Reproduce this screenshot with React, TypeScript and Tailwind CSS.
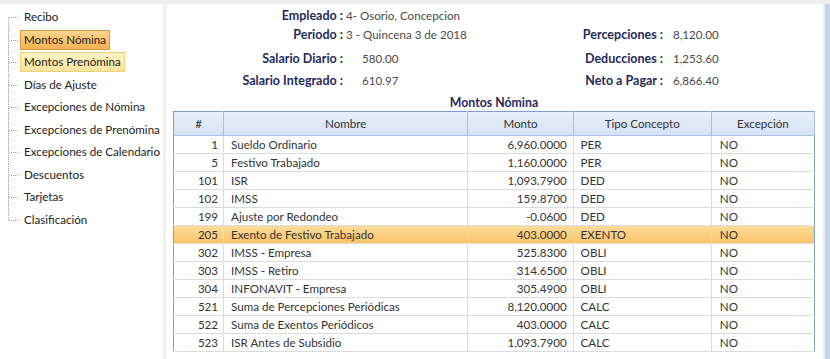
import React from "react";

const treeItems = [
  "Recibo",
  "Montos Nómina",
  "Montos Prenómina",
  "Días de Ajuste",
  "Excepciones de Nómina",
  "Excepciones de Prenómina",
  "Excepciones de Calendario",
  "Descuentos",
  "Tarjetas",
  "Clasificación",
];

const rows: [string, string, string, string, string][] = [
  ["1", "Sueldo Ordinario", "6,960.0000", "PER", "NO"],
  ["5", "Festivo Trabajado", "1,160.0000", "PER", "NO"],
  ["101", "ISR", "1,093.7900", "DED", "NO"],
  ["102", "IMSS", "159.8700", "DED", "NO"],
  ["199", "Ajuste por Redondeo", "-0.0600", "DED", "NO"],
  ["205", "Exento de Festivo Trabajado", "403.0000", "EXENTO", "NO"],
  ["302", "IMSS - Empresa", "525.8300", "OBLI", "NO"],
  ["303", "IMSS - Retiro", "314.6500", "OBLI", "NO"],
  ["304", "INFONAVIT - Empresa", "305.4900", "OBLI", "NO"],
  ["521", "Suma de Percepciones Periódicas", "8,120.0000", "CALC", "NO"],
  ["522", "Suma de Exentos Periódicos", "403.0000", "CALC", "NO"],
  ["523", "ISR Antes de Subsidio", "1,093.7900", "CALC", "NO"],
];

function TreeLine({ first, last }: { first: boolean; last: boolean }) {
  return (
    <svg width="20" height="22.5" className="shrink-0">
      <line
        x1="8.5"
        y1={first ? 11.25 : 0}
        x2="8.5"
        y2={last ? 11.25 : 22.5}
        stroke="#a0a0a0"
        strokeWidth="1"
        strokeDasharray="1 1"
      />
      <line x1="9" y1="11.5" x2="19" y2="11.5" stroke="#a0a0a0" strokeWidth="1" strokeDasharray="1 1" />
    </svg>
  );
}

export default function App() {
  const font = { fontFamily: 'Lato, "Noto Sans", sans-serif' };
  const lbl = "text-right font-bold text-[#1f2b5c] text-[12.5px]";
  return (
    <div className="w-[830px] h-[359px] bg-white flex flex-col overflow-hidden text-[11.6px]" style={font}>
      <div className="h-[4px] bg-[#efefef] shrink-0" />
      <div className="flex flex-1 min-h-0">
        {/* left tree */}
        <div className="w-[163px] shrink-0 pt-[2px] bg-white">
          {treeItems.map((t, i) => {
            const sel = i === 1;
            const hov = i === 2;
            return (
              <div key={t} className="flex items-center h-[22.5px]">
                <TreeLine first={i === 0} last={i === treeItems.length - 1} />
                <span
                  className={
                    "px-[3px] h-[20px] leading-[18px] border whitespace-nowrap text-[#222] " +
                    (sel
                      ? "border-[#d49a45] bg-gradient-to-b from-[#fcd58e] to-[#f6b24f]"
                      : hov
                      ? "border-[#efd27e] bg-gradient-to-b from-[#fff3c4] to-[#fde49c]"
                      : "border-transparent")
                  }
                >
                  {t}
                </span>
              </div>
            );
          })}
        </div>
        <div className="w-[3px] shrink-0 bg-[#efefef]" />
        {/* main */}
        <div className="flex-1 pl-[7px] pt-[3px]">
          <div className="text-[#4a4a4a]">
            <div className="flex h-[18px] items-center -ml-[7px]">
              <span className={"w-[177px] " + lbl}>Empleado :</span>
              <span className="pl-[3px]">4- Osorio, Concepcion</span>
            </div>
            <div className="flex h-[18px] items-center -ml-[7px] mt-[1px]">
              <span className={"w-[177px] " + lbl}>Periodo :</span>
              <span className="pl-[3px] w-[200px]">3 - Quincena 3 de 2018</span>
              <span className={"w-[120px] " + lbl}>Percepciones :</span>
              <span className="pl-[10px]">8,120.00</span>
            </div>
            <div className="flex h-[18px] items-center -ml-[7px] mt-[6px]">
              <span className={"w-[177px] " + lbl}>Salario Diario :</span>
              <span className="pl-[19px] w-[200px]">580.00</span>
              <span className={"w-[120px] " + lbl}>Deducciones :</span>
              <span className="pl-[10px]">1,253.60</span>
            </div>
            <div className="flex h-[18px] items-center -ml-[7px] mt-[4px]">
              <span className={"w-[177px] " + lbl}>Salario Integrado :</span>
              <span className="pl-[19px] w-[200px]">610.97</span>
              <span className={"w-[120px] " + lbl}>Neto a Pagar :</span>
              <span className="pl-[10px]">6,866.40</span>
            </div>
          </div>
          <div className="w-[642px] mt-[5px] h-[16px] leading-[16px] text-center font-bold text-[#1f2b5c] text-[12.3px]">
            Montos Nómina
          </div>
          <table className="w-[642px] table-fixed border-collapse border border-[#7d9dd4] text-[#333]">
            <colgroup>
              <col className="w-[50px]" />
              <col className="w-[244px]" />
              <col className="w-[105px]" />
              <col className="w-[138px]" />
              <col className="w-[103px]" />
            </colgroup>
            <thead>
              <tr className="h-[24px] bg-gradient-to-b from-[#e8f0fa] to-[#d5e2f4]">
                {["#", "Nombre", "Monto", "Tipo Concepto", "Excepción"].map((h) => (
                  <th
                    key={h}
                    className="font-normal text-center border-r border-b border-[#a9bfe2] p-0 leading-[22px]"
                  >
                    {h}
                  </th>
                ))}
              </tr>
            </thead>
            <tbody>
              {rows.map((r) => {
                const hl = r[0] === "205";
                return (
                  <tr
                    key={r[0]}
                    className={"h-[18px] " + (hl ? "bg-gradient-to-b from-[#fddc9a] to-[#f9c266]" : "bg-white")}
                  >
                    <td className="p-0 pr-[5px] text-right border-r border-b border-[#dcdcdc] leading-[17px] whitespace-nowrap">{r[0]}</td>
                    <td className="p-0 pl-[7px] border-r border-b border-[#dcdcdc] leading-[17px] whitespace-nowrap">{r[1]}</td>
                    <td className="p-0 pr-[6px] text-right border-r border-b border-[#dcdcdc] leading-[17px] whitespace-nowrap">{r[2]}</td>
                    <td className="p-0 pl-[7px] border-r border-b border-[#dcdcdc] leading-[17px] whitespace-nowrap">{r[3]}</td>
                    <td className="p-0 pl-[8px] border-b border-[#dcdcdc] leading-[17px] whitespace-nowrap">{r[4]}</td>
                  </tr>
                );
              })}
            </tbody>
          </table>
        </div>
        <div className="w-[2px] shrink-0 bg-[#e8eef9]" />
        <div className="w-[5px] shrink-0 bg-[#c3d4f1]" />
      </div>
    </div>
  );
}
